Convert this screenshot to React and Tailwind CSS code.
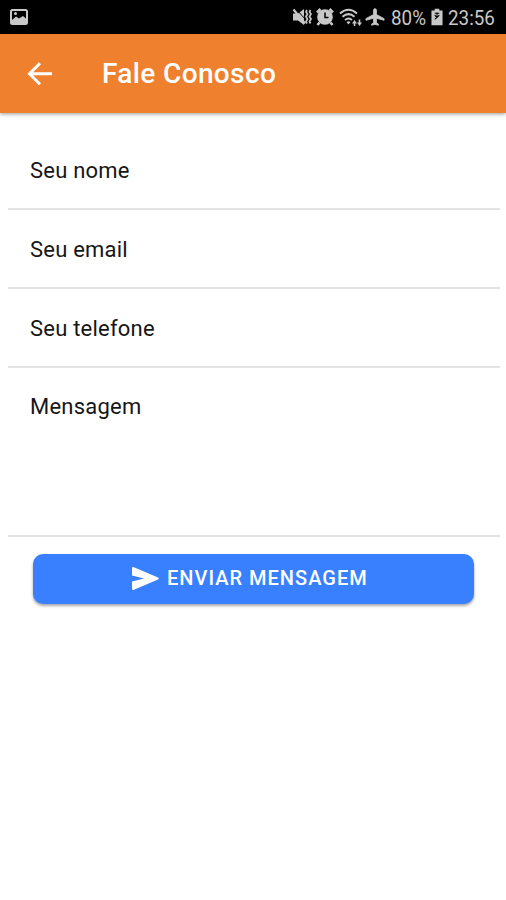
const fields = ['Seu nome', 'Seu email', 'Seu telefone'];

function StatusBar() {
  return (
    <div className="flex h-[34px] items-center bg-black text-[#c8c8c8]">
      <svg className="ml-[10px] h-[16px] w-[18px]" viewBox="0 0 18 16" fill="none">
        <rect x="1" y="1" width="16" height="14" rx="1.5" stroke="currentColor" strokeWidth="2" />
        <path d="M2 11l4-3.500 3 2 4-2.500 4 3.500V15H2z" fill="currentColor" />
        <circle cx="5.500" cy="4.500" r="1.500" fill="currentColor" />
      </svg>

      <svg className="ml-auto h-[18px] w-[20px]" viewBox="0 0 20 18" fill="none" stroke="currentColor">
        <path d="M1 5.500h5L12 1v16l-6-4.500H1z" fill="currentColor" stroke="none" />
        <path d="M4 1l9.500 10.500" stroke="#000" strokeWidth="1" />
        <path d="M1.500 1.500l11.500 14" strokeWidth="2.200" />
        <path d="M15 2l-1 2 1.500 2-1.500 2.500 1.500 2.500-1.500 2.500 1 2M18.500 2l-1 2 1.500 2-1.500 2.500 1.500 2.500-1.500 2.500 1 2" strokeWidth="1.700" />
      </svg>

      <svg className="ml-[4px] h-[18px] w-[18px]" viewBox="0 0 18 18" fill="none" stroke="currentColor">
        <circle cx="9" cy="9" r="7.800" fill="currentColor" stroke="none" />
        <path d="M1 4.500L4.500 1M17 4.500L13.500 1M3.500 14.500L1.500 17M14.500 14.500l2 2.500" strokeWidth="2.600" />
        <path d="M9 4.500V9.500h3.500" stroke="#000" strokeWidth="1.500" />
      </svg>

      <svg className="ml-[5px] h-[19px] w-[23px]" viewBox="0 0 23 19" fill="none" stroke="currentColor" strokeWidth="2">
        <path d="M1 5.500Q9.500-2 18 5.500M3.500 8.800Q9.500 3.500 15.500 8.800M6 12Q9.500 9 13 12" />
        <path d="M7.500 14Q9.500 12.500 11.500 14l-2 2.500z" fill="currentColor" stroke="none" />
        <path d="M15.500 18v-4M20.500 11.500v4" strokeWidth="1.600" />
        <path d="M13 15.500l2.500-3.500 2.500 3.500zM18 14.500l2.500 3.500 2.500-3.500z" fill="currentColor" stroke="none" />
      </svg>

      <svg className="ml-[3px] h-[18px] w-[20px]" viewBox="1 1 21 22" preserveAspectRatio="none" fill="currentColor">
        <path d="M21 16v-2l-8-5V3.500C13 2.670 12.330 2 11.500 2S10 2.670 10 3.500V9l-8 5v2l8-2.500V19l-2 1.500V22l3.500-1 3.500 1v-1.500L13 19v-5.500l8 2.500z" stroke="currentColor" strokeWidth="1" />
      </svg>

      <span className="ml-[6px] w-[37px] pt-px text-[20px] leading-none">
        <span className="inline-block origin-left scale-x-[0.94]">80%</span>
      </span>

      <svg className="ml-[3px] h-[18px] w-[12px]" viewBox="0 0 13 18" fill="none">
        <path d="M4 0h5v2h3.500v16H.5V2H4z" fill="currentColor" />
        <path d="M4 7l2.500 2.500L9 7M6.500 4v5M4 5h5M6.500 9.500L4 11.500" stroke="#000" strokeWidth="1.100" />
      </svg>

      <span className="ml-[5px] w-[58px] pt-px text-[20px] leading-none">
        <span className="inline-block origin-left scale-x-[0.94]">23:56</span>
      </span>
    </div>
  );
}

export default function App() {
  return (
    <div className="flex h-[900px] w-[506px] flex-col overflow-hidden bg-white font-['Roboto',sans-serif]">
      <StatusBar />

      <header className="flex h-[79px] shrink-0 items-center bg-[#ef802e] text-white shadow-[0_1px_4px_rgba(0,0,0,0.4)]">
        <button className="ml-[27px] h-[26px] w-[26px]" aria-label="Voltar">
          <svg className="h-full w-full" viewBox="0 0 26 26" fill="none" stroke="currentColor" strokeWidth="3">
            <path d="M25 12.700H3M13 2.200L2.500 12.700 13 23.200" />
          </svg>
        </button>
        <h1 className="ml-[49px] text-[28px] font-medium leading-none tracking-[0.370px]">Fale Conosco</h1>
      </header>

      <form className="flex flex-col pl-2 pr-[6px] pt-[18px]">
        {fields.map((label) => (
          <label key={label} className="flex h-[79px] items-center border-b-2 border-[#e3e3e3] pl-[22px] pt-px text-[22px] tracking-[0.220px] text-[#161616]">
            {label}
          </label>
        ))}
        <label className="h-[169px] border-b-2 border-[#e3e3e3] pl-[22px] pt-[22px] text-[22px] tracking-[0.220px] text-[#161616]">
          Mensagem
        </label>

        <button
          type="button"
          className="ml-[25px] mr-[26px] mt-[17px] flex h-[50px] items-center rounded-[10px] bg-[#3880ff] pb-[2px] pl-[99px] text-white shadow-[0_2px_3px_rgba(0,0,0,0.35)]"
        >
          <svg className="h-[23px] w-[27px]" viewBox="0 0 27 23" fill="currentColor">
            <path d="M0 1.500Q0-.5 2 .3L26 10.600Q27.500 11.500 26 12.400L2 22.700Q0 23.500 0 21.500V14.500l12-3L0 8.500z" />
          </svg>
          <span className="ml-[8px] whitespace-nowrap text-[20px] font-medium tracking-[1px]">ENVIAR MENSAGEM</span>
        </button>
      </form>
    </div>
  );
}
